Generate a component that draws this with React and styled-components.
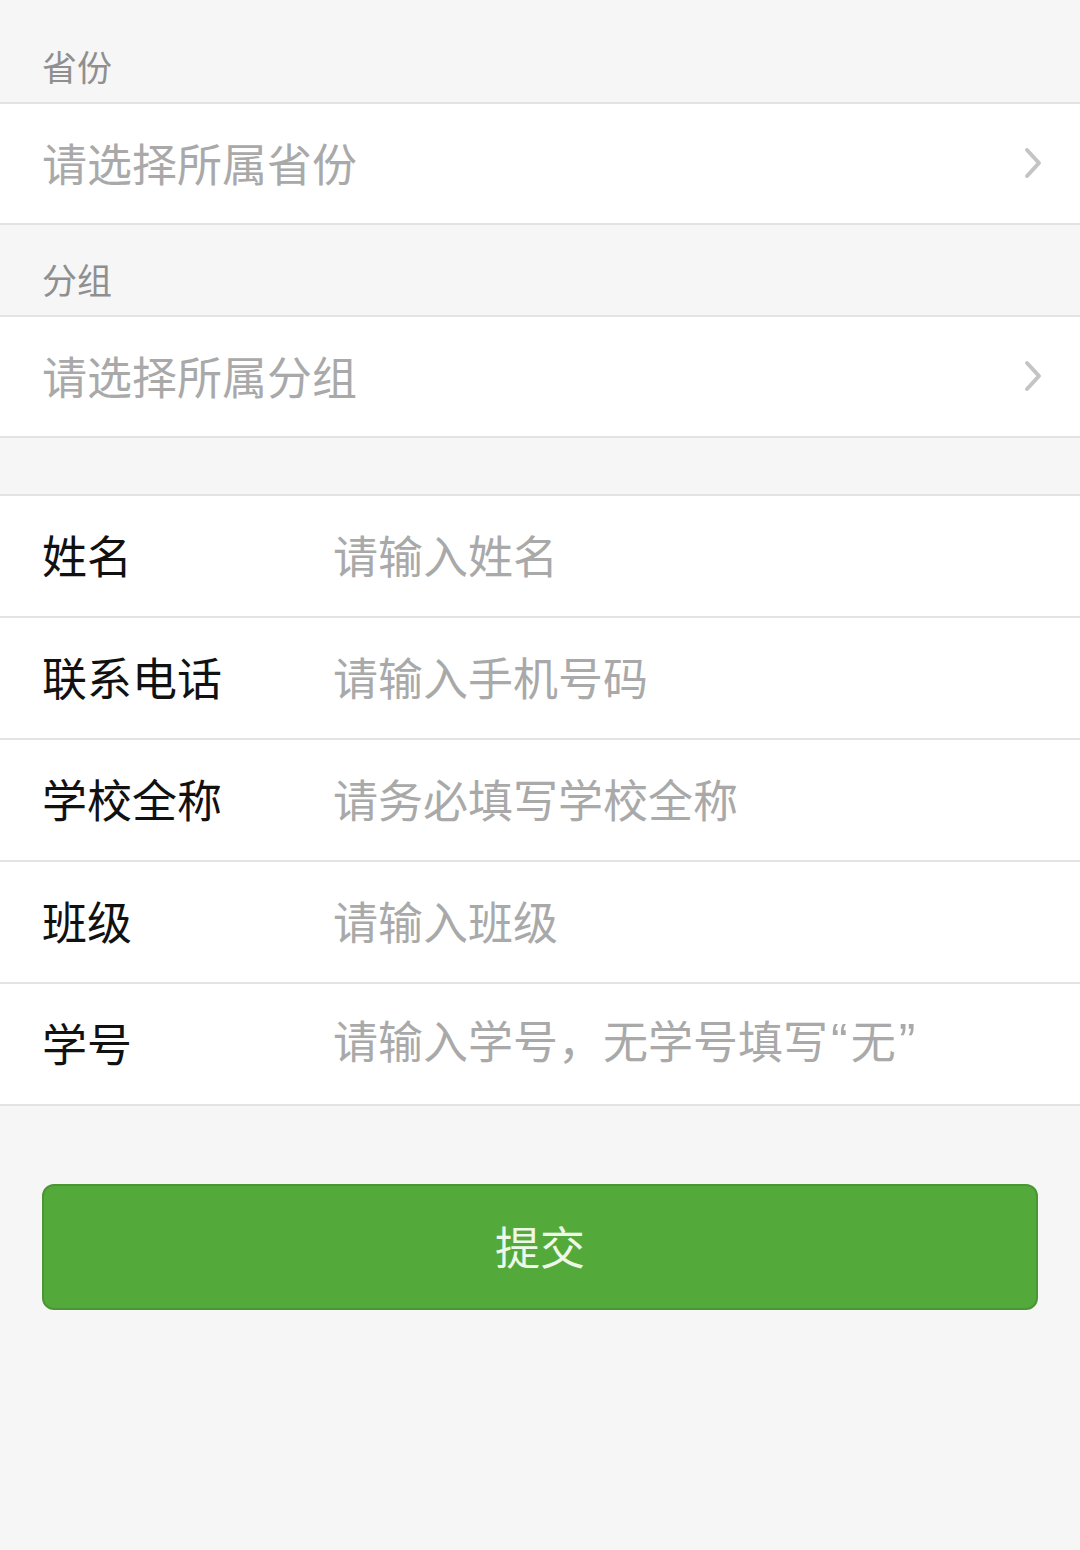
import React from "react";
import styled, { createGlobalStyle } from "styled-components";

const Global = createGlobalStyle`
  html, body { margin: 0; padding: 0; background: #f6f6f6; }
  body { font-family: "Noto Sans CJK SC", "Noto Sans", sans-serif; }
`;

const Page = styled.div`
  width: 1080px;
  min-height: 1550px;
  background: #f6f6f6;
  padding-top: 12px;
  box-sizing: border-box;
`;

const SectionHeader = styled.div`
  height: 92px;
  box-sizing: border-box;
  display: flex;
  align-items: flex-end;
  padding: 0 42px 19px;
  font-size: 35px;
  line-height: 1;
  color: #8f8f8f;
  border-bottom: 2px solid #e3e3e3;
`;

const SelectRow = styled.div`
  height: 121px;
  box-sizing: border-box;
  display: flex;
  align-items: center;
  justify-content: space-between;
  padding: 0 36px 2px 42px;
  background: #fff;
  border-bottom: 2px solid #e3e3e3;
`;

const Placeholder = styled.span`
  font-size: 45px;
  line-height: 1;
  color: #a9a9a9;
  white-space: nowrap;
`;

const Quote = styled.span`
  font-family: "Liberation Sans", sans-serif;
  font-size: 50px;
  padding: 0 3px;
`;

const Chevron = () => (
  <svg width="22" height="34" viewBox="0 0 22 34" fill="none">
    <path d="M5 4 L17 17 L5 30" stroke="#c4c4c4" strokeWidth="4" strokeLinecap="round" strokeLinejoin="round" />
  </svg>
);

const Spacer = styled.div`
  height: ${(p) => p.$h}px;
`;

const FormGroup = styled.div`
  background: #fff;
  border-top: 2px solid #e3e3e3;
`;

const FieldRow = styled.div`
  height: 122px;
  box-sizing: border-box;
  display: flex;
  align-items: center;
  padding-left: 42px;
  padding-bottom: 4px;
  border-bottom: 2px solid #e3e3e3;
`;

const Label = styled.span`
  width: 291px;
  flex-shrink: 0;
  font-size: 45px;
  line-height: 1;
  color: #111;
`;

const SubmitWrap = styled.div`
  padding: 78px 42px 0;
`;

const SubmitButton = styled.button`
  width: 100%;
  height: 126px;
  border: 2px solid #4b9634;
  border-radius: 12px;
  background: #53aa3a;
  color: #eef8e8;
  font-family: inherit;
  font-size: 45px;
  line-height: 1;
  display: flex;
  align-items: center;
  justify-content: center;
  padding-bottom: 4px;
  cursor: pointer;
`;

const fields = [
  ["姓名", "请输入姓名"],
  ["联系电话", "请输入手机号码"],
  ["学校全称", "请务必填写学校全称"],
  ["班级", "请输入班级"],
  [
    "学号",
    <>
      请输入学号，无学号填写<Quote>“</Quote>无<Quote>”</Quote>
    </>,
  ],
];

export default function App() {
  return (
    <Page>
      <Global />
      <SectionHeader>省份</SectionHeader>
      <SelectRow>
        <Placeholder>请选择所属省份</Placeholder>
        <Chevron />
      </SelectRow>
      <SectionHeader>分组</SectionHeader>
      <SelectRow>
        <Placeholder>请选择所属分组</Placeholder>
        <Chevron />
      </SelectRow>
      <Spacer $h={56} />
      <FormGroup>
        {fields.map(([l, p]) => (
          <FieldRow key={l}>
            <Label>{l}</Label>
            <Placeholder>{p}</Placeholder>
          </FieldRow>
        ))}
      </FormGroup>
      <SubmitWrap>
        <SubmitButton>提交</SubmitButton>
      </SubmitWrap>
    </Page>
  );
}
